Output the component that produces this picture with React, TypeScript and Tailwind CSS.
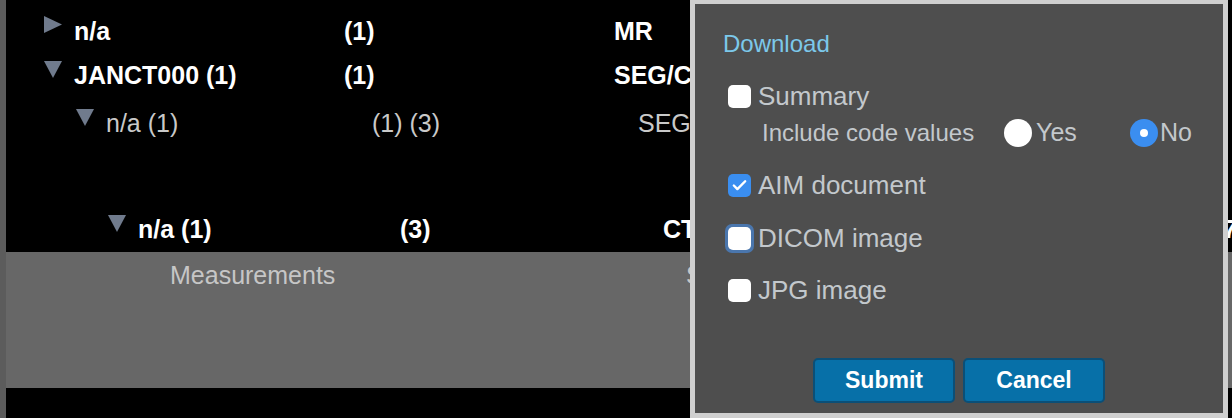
import { Check } from "lucide-react";

const font = { fontFamily: '"Liberation Sans", Arial, sans-serif' };

function Caret({ open }: { open: boolean }) {
  return (
    <svg width="20" height="18" viewBox="0 0 20 18" className="mb-[14px] shrink-0">
      {open ? (
        <polygon points="1,1 19,1 10,18" fill="#707b8d" />
      ) : (
        <polygon points="1,0 19,8.5 1,17" fill="#707b8d" />
      )}
    </svg>
  );
}

type Row = {
  indent: number;
  name: string;
  count: string;
  modality: string;
  nameW: number;
  countW: number;
  dim?: boolean;
  extra?: string;
};

const rows: Row[] = [
  { indent: 43, name: "n/a", count: "(1)", modality: "MR", nameW: 270, countW: 270 },
  { indent: 43, name: "JANCT000 (1)", count: "(1)", modality: "SEG/CT", nameW: 270, countW: 270 },
  { indent: 75, name: "n/a (1)", count: "(1) (3)", modality: "SEG", nameW: 266, countW: 266, dim: true },
];

function TreeRow({ row, className }: { row: Row; className: string }) {
  const text = row.dim
    ? "text-[#c9c9c9] font-normal"
    : "text-white font-bold";
  return (
    <div className={`flex items-center ${className} ${text} text-[25px]`} style={{ paddingLeft: row.indent }}>
      <div className="w-[31px] flex items-center">
        <Caret open={row.name !== "n/a"} />
      </div>
      <div className="shrink-0 whitespace-nowrap" style={{ width: row.nameW }}>
        {row.name}
      </div>
      <div className="shrink-0 whitespace-nowrap" style={{ width: row.countW }}>
        {row.count}
      </div>
      <div className="whitespace-nowrap shrink-0 w-[560px]">{row.modality}</div>
      {row.extra ? <div className="whitespace-nowrap">{row.extra}</div> : null}
    </div>
  );
}

function Box({ checked, focused }: { checked?: boolean; focused?: boolean }) {
  if (checked) {
    return (
      <span className="flex h-[23px] w-[23px] shrink-0 items-center justify-center rounded-[5px] bg-[#3a8ef0]">
        <Check className="h-[17px] w-[17px] text-white" strokeWidth={3.4} />
      </span>
    );
  }
  if (focused) {
    return (
      <span className="-ml-[3px] flex h-[29px] w-[29px] shrink-0 items-center justify-center rounded-[7px] bg-[#4a76ad]">
        <span className="h-[23px] w-[23px] rounded-[5px] bg-white" />
      </span>
    );
  }
  return <span className="h-[23px] w-[23px] shrink-0 rounded-[5px] bg-white" />;
}

function Option({ label, checked, focused, className }: { label: string; checked?: boolean; focused?: boolean; className: string }) {
  return (
    <label className={`flex h-[28px] items-center gap-[7px] pl-[5px] text-[26px] text-[#c3c8cc] ${className}`}>
      <Box checked={checked} focused={focused} />
      <span className={focused ? "-ml-[3px]" : ""}>{label}</span>
    </label>
  );
}

function DownloadDialog() {
  return (
    <div
      className="absolute left-[690px] top-[-1px] flex h-[419px] w-[538px] flex-col border-[5px] border-[#cfcfcf] bg-[#4e4e4e] pl-[28px] pt-[26px]"
      style={font}
    >
      <div className="h-[28px] text-[24px] leading-[28px] text-[#7cc8ea]">Download</div>
      <Option label="Summary" className="mt-[24px]" />
      <div className="mt-[8px] flex h-[30px] items-center pl-[39px] text-[24px] text-[#c3c8cc]">
        <span className="w-[242px] whitespace-nowrap">Include code values</span>
        <span className="flex w-[126px] items-center gap-[4px]">
          <span className="h-[28px] w-[28px] rounded-full bg-white" />
          <span className="text-[25px]">Yes</span>
        </span>
        <span className="flex items-center gap-[2px]">
          <span className="flex h-[28px] w-[28px] items-center justify-center rounded-full bg-[#3b8ef0]">
            <span className="h-[8px] w-[8px] rounded-full bg-white" />
          </span>
          <span className="text-[25px]">No</span>
        </span>
      </div>
      <Option label="AIM document" checked className="mt-[23px]" />
      <Option label="DICOM image" focused className="mt-[25px]" />
      <Option label="JPG image" className="mt-[24px]" />
      <div className="mt-[54px] flex justify-center gap-[8px] pr-[28px]">
        <button className="h-[45px] w-[142px] rounded-[5px] border-2 border-[#0b4f77] bg-[#0770a8] text-[23px] font-bold text-white">
          Submit
        </button>
        <button className="h-[45px] w-[142px] rounded-[5px] border-2 border-[#0b4f77] bg-[#0770a8] text-[23px] font-bold text-white">
          Cancel
        </button>
      </div>
    </div>
  );
}

export default function App() {
  return (
    <div className="relative h-[418px] w-[1232px] overflow-hidden bg-black" style={font}>
      <div className="flex h-full border-l-[6px] border-[#5c5c5c]">
        <div className="flex flex-1 flex-col -ml-[6px]">
          <div className="h-[252px] pt-[10px]">
            <TreeRow row={rows[0]} className="h-[44px]" />
            <TreeRow row={rows[1]} className="h-[44px]" />
            <TreeRow row={rows[2]} className="h-[52px]" />
            <TreeRow
              row={{
                indent: 107,
                name: "n/a (1)",
                count: "(3)",
                modality: "CT",
                nameW: 262,
                countW: 263,
                extra: "7",
              }}
              className="mt-[58px] h-[44px]"
            />
          </div>
          <div className="ml-[6px] flex h-[136px] bg-[#676767] pt-[5px] text-[25px] text-[#c6c6c6]">
            <span className="ml-[164px] w-[516px]">Measurements</span>
            <span>Series</span>
          </div>
        </div>
      </div>
      <DownloadDialog />
    </div>
  );
}
